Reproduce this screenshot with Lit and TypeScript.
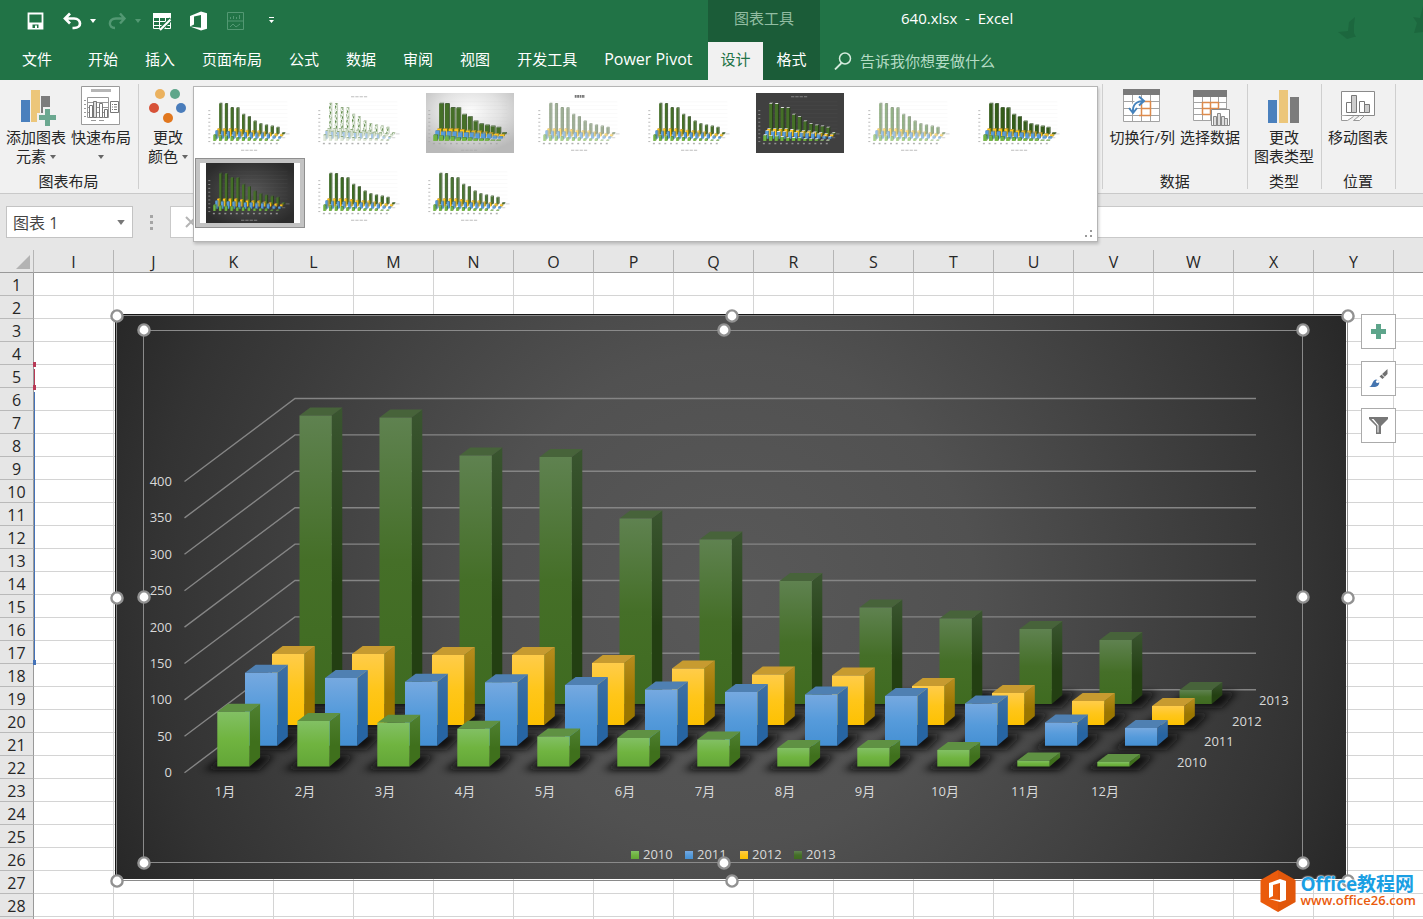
import { LitElement, html, svg, css, nothing } from "lit";
import { customElement, property } from "lit/decorators.js";
import { classMap } from "lit/directives/class-map.js";

const SERIES = [
  {
    name: "2013", x: 299.5, base: 704, labelX: 1259, labelY: 705,
    top: "#47633a", side: ["#3a5530", "#233f12"], front: ["#5f8250", "#456f28", "#3f6b20"],
    tops: [415.5, 417.5, 455.5, 457, 518.5, 539.5, 581, 607.5, 618.5, 629, 640, 690],
  },
  {
    name: "2012", x: 272, base: 725, labelX: 1232, labelY: 726,
    top: "#c79b30", side: ["#b88d1e", "#9a7600"], front: ["#ffcc4a", "#ffc61a", "#fdc101"],
    tops: [654, 654, 655, 655, 663, 668.5, 674.5, 675.5, 686, 693, 701, 706],
  },
  {
    name: "2011", x: 245, base: 745.7, labelX: 1204, labelY: 746,
    top: "#4f80b2", side: ["#3f6fa3", "#2765a3"], front: ["#76a9e0", "#569bdb", "#4590d3"],
    tops: [672.7, 678, 681.7, 682.3, 685, 689.5, 692, 694.5, 696, 703.5, 722.5, 728],
  },
  {
    name: "2010", x: 217.3, base: 766.5, labelX: 1177, labelY: 767,
    top: "#5f9143", side: ["#4f8030", "#3f701c"], front: ["#82c064", "#70b440", "#63a637"],
    tops: [711.7, 721, 722.7, 728.7, 736.5, 738, 739.5, 748, 748, 750, 760.5, 762],
  },
];
const MONTHS = ["1月", "2月", "3月", "4月", "5月", "6月", "7月", "8月", "9月", "10月", "11月", "12月"];
const LEVELS = [400, 350, 300, 250, 200, 150, 100, 50, 0];
const PITCH = 80;
const STEP = 36.4;

/* ---------- gallery thumbnail ---------- */

type Look = {
  name: string;
  bg?: string;
  ink?: string;
  fade?: number;
  wide?: number;
  hatch?: boolean;
  caps?: boolean;
  legendTop?: boolean;
  title?: boolean;
  tint?: string;
};

const LOOKS: Look[] = [
  { name: "样式 1" },
  { name: "样式 2", hatch: true, legendTop: true },
  { name: "样式 3", bg: "light", wide: 58 },
  { name: "样式 4", fade: 0.6, title: true, tint: "#5f7a50" },
  { name: "样式 5" },
  { name: "样式 6", bg: "flat", ink: "#999", wide: 44, caps: true, legendTop: true },
  { name: "样式 7", fade: 0.6, tint: "#4f7f3a" },
  { name: "样式 8", wide: 48, tint: "#345c1a" },
  { name: "样式 9", bg: "dark", ink: "#999" },
  { name: "样式 10", tint: "#3c6a24" },
  { name: "样式 11", tint: "#4a7434" },
];

@customElement("chart-thumb")
class ChartThumb extends LitElement {
  @property({ attribute: false }) look: Look = LOOKS[0];

  static styles = css`
    :host { display: block; width: 88px; height: 60px; }
    svg { display: block; width: 100%; height: 100%; }
  `;

  render() {
    const l = this.look;
    const ink = l.ink ?? "#a9a9a9";
    const w = l.wide ?? 34;
    const bg = l.bg === "light" ? "url(#light)" : l.bg === "dark" ? "url(#dark)" : l.bg === "flat" ? "#404040" : "#fff";
    const legendY = l.legendTop ? 350 : 854;
    return html`<svg viewBox="116 315 1231 565" preserveAspectRatio="none" aria-hidden="true">
      <defs>
        <radialGradient id="light" cx=".5" cy=".3" r=".7"><stop offset="0" stop-color="#fcfcfc"/><stop offset=".5" stop-color="#e2e2e2"/><stop offset="1" stop-color="#b9b9b9"/></radialGradient>
        <radialGradient id="dark" cx=".5" cy=".5" r=".6"><stop offset="0" stop-color="#595959"/><stop offset="1" stop-color="#2c2c2c"/></radialGradient>
        <pattern id="hatch" width="34" height="40" patternUnits="userSpaceOnUse" patternTransform="rotate(28)"><rect width="34" height="40" fill="#f1f6ee"/><rect width="17" height="28" fill="#55823f"/></pattern>
      </defs>
      <rect x="116" y="315" width="1231" height="565" fill=${bg}/>
      ${LEVELS.map((_, i) => svg`
        <path d="M295 ${398 + i * STEP}H1256" stroke=${ink} stroke-width="3" opacity=".22"/>
        <path d="M148 ${481 + i * STEP}h28" stroke=${ink} stroke-width="9"/>`)}
      ${MONTHS.map((_, i) => svg`<path d="M${212 + i * PITCH} 791h28" stroke=${ink} stroke-width="14" opacity=".9"/>`)}
      <g opacity=${l.fade ?? 1}>
        ${SERIES.map((s) => s.tops.map((t, i) => {
          const x = s.x + i * PITCH;
          const green = s.name === "2013";
          const fill = l.hatch ? (green ? "url(#hatch)" : s.name === "2011" ? "#a9c8e6" : "#dfe8d8") : green ? l.tint ?? s.front[1] : s.front[1];
          return svg`<path d="M${x} ${t}h${w}V${s.base}h${-w}z" fill=${fill}/>
            <path d="M${x} ${t}l11 -8h${w}l-11 8z" fill=${l.caps ? "#e8e8e8" : l.hatch ? "#8aa67a" : s.top}/>
            <path d="M${x + w} ${t}l11 -8V${s.base - 10}l-11 10z" fill=${l.hatch ? "#b9c8b0" : s.side[1]}/>`;
        }))}
      </g>
      <path d="M1230 700h55M1180 736h45" stroke=${ink} stroke-width="8" opacity=".7"/>
      <path d="M606 ${legendY}h46m14 0h46m14 0h46m14 0h46" stroke=${ink} stroke-width="11" opacity=".75"/>
      ${l.title ? svg`<path d="M658 346h142" stroke="#777" stroke-width="26" stroke-dasharray="26 8"/>` : nothing}
    </svg>`;
  }
}

/* ---------- the selected chart ---------- */

@customElement("chart-object")
class ChartObject extends LitElement {
  static styles = css`
    :host { display: block; }
    svg { display: block; width: 100%; height: 100%; }
    text { font: 13px "Open Sans", "Noto Sans CJK SC", sans-serif; fill: #d9d9d9; }
    .end { text-anchor: end; }
    .mid { text-anchor: middle; }
    .grid { stroke: #858585; stroke-width: 1.4; fill: none; }
    .frame { stroke: #8a8a8a; stroke-width: 1; fill: none; }
    .handle { fill: #fff; stroke: #919191; stroke-width: 2.4; }
  `;

  private handles(xs: number[], ys: number[]) {
    return ys.map((y, r) => xs.map((x, c) => (r === 1 && c === 1 ? nothing : svg`<circle class="handle" cx=${x} cy=${y} r="5.6"/>`)));
  }

  render() {
    return html`<svg viewBox="108 306 1248 584" role="img" aria-label="三维柱形图">
      <defs>
        <radialGradient id="bg" gradientUnits="userSpaceOnUse" cx="731" cy="597" r="680">
          <stop offset="0" stop-color="#595959"/><stop offset=".36" stop-color="#515151"/>
          <stop offset=".85" stop-color="#333333"/><stop offset="1" stop-color="#272727"/>
        </radialGradient>
        <filter id="soft" x="-50%" y="-100%" width="200%" height="300%"><feGaussianBlur stdDeviation="5 3"/></filter>
        ${SERIES.map((s) => svg`
          <linearGradient id="f${s.name}" x2="0" y2="1"><stop offset="0" stop-color=${s.front[0]}/><stop offset=".5" stop-color=${s.front[1]}/><stop offset="1" stop-color=${s.front[2]}/></linearGradient>
          <linearGradient id="s${s.name}" x2="0" y2="1"><stop offset="0" stop-color=${s.side[0]}/><stop offset=".6" stop-color=${s.side[1]}/></linearGradient>`)}
      </defs>
      <rect x="115" y="314" width="1231" height="565" fill="url(#bg)"/>
      ${LEVELS.map((v, i) => svg`
        <path class="grid" d="M184.500 ${481.5 + i * STEP}L295 ${398.5 + i * STEP}H1256"/>
        <text class="end" x="172" y=${486 + i * STEP}>${v}</text>`)}
      ${SERIES.map((s) => svg`
        <g filter="url(#soft)" opacity=".95">${s.tops.map((_, i) => {
          const x = s.x + i * PITCH;
          return svg`<path d="M${x - 13} ${s.base + 4}l22 -16h48l-15 16z" fill="#0c0c0c"/>`;
        })}</g>
        ${s.tops.map((t, i) => {
          const x = s.x + i * PITCH;
          return svg`<path d="M${x + 32.3} ${t}l10.500 -8V${s.base - 9}l-10.500 9z" fill="url(#s${s.name})"/>
            <path d="M${x} ${t}l10.700 -8h32.300l-10.700 8z" fill=${s.top}/>
            <path d="M${x} ${t}h32.300V${s.base}h-32.300z" fill="url(#f${s.name})"/>`;
        })}
        <text x=${s.labelX} y=${s.labelY}>${s.name}</text>`)}
      ${MONTHS.map((m, i) => svg`<text class="mid" x=${225 + i * PITCH} y="796">${m}</text>`)}
      ${[...SERIES].reverse().map((s, i) => svg`
        <rect x=${631 + Math.round(i * 54.4)} y="851" width="8" height="8" fill="url(#f${s.name})"/>
        <text x=${643 + Math.round(i * 54.4)} y="859">${s.name}</text>`)}
      <rect class="frame" x="143.5" y="330.5" width="1159" height="532"/>
      <path d="M115.500 879V314.500H1346" stroke="#161616" fill="none"/>
      <rect class="frame" x="116.5" y="315.5" width="1231" height="565"/>
      ${this.handles([117, 732, 1348], [316, 598, 881])}
      ${this.handles([144, 724, 1303], [330, 597, 863])}
    </svg>`;
  }
}

/* ---------- icons ---------- */

const quick = {
  save: svg`<path fill="none" stroke="#fff" stroke-width="1.800" d="M1.500 1.500h14v15h-14z"/><path fill="#fff" d="M2 10.500h13V17H2z"/><path fill="#217346" d="M5.500 12.500h6V16h-1.500v-2.500H8V16H5.500z"/>`,
  undo: svg`<path fill="none" stroke="#fff" stroke-width="2.700" d="M2 6.500h9c8 .5 8 9.500 0 9.500H9.500M7 1.500l-5 5 5 5"/>`,
  redo: svg`<path fill="none" stroke="#539873" stroke-width="2.400" d="M16 6.500H8c-8 .5-8 9.500-1 9.500M12 1.500l4.500 5-4.500 5"/>`,
  table: svg`<path fill="#fff" d="M0 1h18v5H0z"/><path fill="none" stroke="#fff" d="M.500 2v14.500h17V2M.500 9.500h17M.500 13.500h17M6.500 6v10M12.500 6v10"/><path stroke="#217346" stroke-width="4" d="M8 17L18 7"/><path stroke="#fff" stroke-width="2.200" d="M7 18l10.500-10.500"/>`,
  office: svg`<path fill="#fff" d="M0 4L11-.5l6 1.700v15.600L11 18.500 0 14.500l11 1.300V3L4 4.600v7.900l-4 2z"/>`,
  sparks: svg`<path fill="none" stroke="#539873" d="M.500.500h16v17H.500zM.500 9h16M3.500 7V5M6.500 7V4M9.500 7V5M12.500 7V3M3 15l3-3 3 3 4-3"/>`,
};

const big = {
  addElement: svg`<path fill="#4a80bd" d="M6 14h9v22H6z"/><path fill="#ecc67a" d="M16 4h9v32h-9z"/><path fill="#7c7c7c" d="M26 10h9v22h-9z"/><path fill="#f1f1f1" d="M28 21h9v6h6v9h-6v6h-9v-6h-6v-9h6z"/><path fill="#6ba890" d="M30 23h5v6h6v5h-6v6h-5v-6h-6v-5h6z"/>`,
  layout: svg`<path fill="#fff" stroke="#9a9a9a" d="M1.500.500h38v38h-38z"/><path fill="#b5b5b5" d="M11 3h20v3H11z"/><path fill="none" stroke="#999" d="M7.500 11.500h21v20h-21zM7.500 16.500h21M7.500 21.500h21M7.500 26.500h21"/><path fill="#fff" stroke="#777" d="M9.500 19.500h3v12h-3zM19.500 17.500h3v14h-3zM24.500 23.500h3v8h-3z"/><path fill="#ddd" stroke="#777" d="M13.500 15.500h3v16h-3z"/><path fill="#fff" stroke="#777" d="M30.500 15.500h8v11h-8z"/><path stroke="#777" stroke-dasharray="1 1 3 9" d="M32 18.500h5M32 21h5M32 23.500h5"/><path stroke="#999" stroke-dasharray="1 3" stroke-width="2" d="M5 14v18"/><path stroke="#999" d="M11 34.500h5M19 34.500h5"/>`,
  colors: svg`<circle cx="13" cy="8" r="5" fill="#ebb25f"/><circle cx="28" cy="8" r="5" fill="#5ea68b"/><circle cx="7" cy="22" r="5" fill="#d75238"/><circle cx="34" cy="22" r="5" fill="#4a7dbb"/><circle cx="21" cy="32" r="5" fill="#e1771e"/>`,
  swap: svg`<path fill="#fff" stroke="#a3a3a3" d="M2.500 3.500h36v32h-36zM2.500 15.500h36M2.500 22.500h36M2.500 29.500h36M11.500 9v26M20.500 9v26M29.500 9v26"/><path fill="#7a7a7a" d="M2 3h37v6H2z"/><path fill="none" stroke="#dc8a4c" stroke-width="1.500" d="M22 15.500h7.500v14H18M20 22.500h10M20.500 18v11"/><path stroke="#fff" stroke-width="5" fill="none" d="M12 26c0-8 4-11 11-11"/><path fill="none" stroke="#4583bd" stroke-width="2" d="M12 27c-1-9 4-12 11-12M18 10.500l5 4.500-5 4.500M8 22l4 5 4-5"/>`,
  select: svg`<path fill="#fff" stroke="#a3a3a3" d="M4.500 4.500h33v30h-33zM4.500 16.500h33M4.500 22.500h33M4.500 28.500h33M13.500 10v24M21.500 10v24M29.500 10v24"/><path fill="#7a7a7a" d="M4 4h34v7H4z"/><path fill="none" stroke="#dc8a4c" stroke-width="1.500" d="M13.500 29V16.500h16V22M13 22.500h17M13.500 28.500h8M21.500 16v12"/><path fill="#fff" stroke="#8a8a8a" d="M22.500 23.500h18v16h-18z"/><path fill="#ddd" stroke="#8a8a8a" d="M24.500 30.500h3v9h-3zM28.500 27.500h3v12h-3zM32.500 30.500h3v9h-3zM35.500 32.500h3v7h-3z"/>`,
  type: svg`<path fill="#4a80bd" d="M5 14h9v23H5z"/><path fill="#ecc67a" d="M16 4h9v33h-9z"/><path fill="#7c7c7c" d="M27 11h9v26h-9z"/>`,
  move: svg`<path fill="#fff" stroke="#8a8a8a" d="M4.500 5.500h33v24h-33z"/><path fill="#fff" stroke="#777" d="M9.500 16.500h5v10h-5z"/><path fill="#ccc" stroke="#777" d="M14.500 9.500h5v17h-5z"/><path fill="#fff" stroke="#777" d="M22.500 15.500h5v11h-5z"/><path fill="#ccc" stroke="#777" d="M27.500 18.500h5v8h-5z"/><path fill="#fff" stroke="#999" d="M4.500 29.500v5h6l6-4M16.500 34.500h6l5-5M16.500 34.500l6-5"/>`,
};

const caret = html`<svg class="caret" viewBox="0 0 6 4" aria-hidden="true"><path fill="currentColor" d="M0 0h6L3 4z"/></svg>`;

/* ---------- application shell ---------- */

@customElement("app-root")
class AppRoot extends LitElement {
  static styles = css`
    :host {
      display: flex;
      flex-direction: column;
      height: 100vh;
      overflow: hidden;
      position: relative;
      font: 15px/19px "Open Sans", "Noto Sans CJK SC", sans-serif;
      color: #262626;
      background: #fff;
    }
    * { box-sizing: border-box; }
    button { font: inherit; color: inherit; background: none; border: 0; padding: 0; margin: 0; }
    svg { display: block; }

    .header { display: flex; flex: none; height: 80px; background: #217346; color: #fff; }
    .main { flex: none; width: 708px; display: flex; flex-direction: column; }
    .quick { height: 42px; display: flex; align-items: center; padding-left: 27px; }
    .quick svg { width: 18px; height: 18px; overflow: visible; }
    .quick .caret, .caret { width: 6px; height: 4px; }
    .q-undo { margin-left: 18px; }
    .q-drop { margin-left: 9px; }
    .q-next { margin-left: 12px; }
    .q-wide { margin-left: 19px; }
    .q-end { margin-left: 24px; }
    .dim { color: #539873; }
    .tabs { height: 38px; display: flex; align-items: center; gap: 27px; padding-left: 22px; padding-bottom: 4px; white-space: nowrap; }
    .tabs .file { margin-right: 9px; }
    .tabs .latin { font-size: 16px; }
    .context { flex: none; width: 112px; background: #1b5c38; }
    .context-title { height: 42px; line-height: 37px; text-align: center; color: #92bda2; }
    .context-tabs { display: grid; grid-template-columns: 55px 57px; height: 38px; }
    .context-tabs button { padding-bottom: 4px; }
    .context-tabs .on { background: #f1f1f1; color: #217346; }
    .right { flex: 1; min-width: 0; display: flex; flex-direction: column; }
    .title { height: 42px; line-height: 37px; padding-left: 81px; font-size: 15px; white-space: pre; }
    .search { height: 38px; display: flex; align-items: center; gap: 8px; padding-left: 14px; }
    .search svg { width: 18px; height: 18px; }
    .search input { flex: 1; min-width: 0; font: inherit; background: none; border: 0; padding: 0; color: #fff; outline: 0; }
    .search input::placeholder { color: #b5dcc5; opacity: 1; }
    .birds { position: absolute; top: 0; right: 0; width: 86px; height: 44px; }

    .ribbon { flex: none; display: flex; height: 114px; background: #f1f1f1; border-bottom: 1px solid #c9c9c9; }
    .group { position: relative; display: flex; flex-direction: column; padding: 6px 7px 0 6px; }
    .group::after { content: ""; position: absolute; right: -1px; top: 4px; bottom: 4px; width: 1px; background: #cfcfcf; }
    .group + .group { margin-left: 1px; }
    .group-row { display: flex; gap: 5px; height: 86px; align-items: flex-start; }
    .group-name { text-align: center; line-height: 19px; }
    .cmd { min-width: 60px; text-align: center; white-space: nowrap; }
    .cmd svg.icon { width: 42px; height: 42px; margin: 0 auto; }
    .cmd .line { display: flex; justify-content: center; align-items: center; height: 19px; gap: 4px; }
    .cmd .caret { color: #666; }
    .styles { flex: 1; min-width: 0; }
    .narrow { min-width: 46px; }
    .tail { flex: none; width: 28px; }

    .gallery {
      position: absolute; z-index: 2; left: 54px; right: 4px; top: 6px; height: 156px;
      background: #fff; border: 1px solid #b5b5b5; box-shadow: 1px 2px 3px rgba(0, 0, 0, .2);
      display: grid; grid-template-columns: repeat(auto-fill, 110px); grid-auto-rows: 70px; align-content: start;
      padding: 1px;
    }
    .thumb { display: flex; align-items: center; justify-content: center; }
    .thumb.on { border: 1px solid #8f8f8f; box-shadow: inset 0 0 0 4px #c3c3c3; }
    .grip { position: absolute; right: 4px; bottom: 3px; width: 8px; height: 8px; }

    .formula { flex: none; display: flex; height: 56px; padding-top: 12px; background: #e6e6e6; align-items: flex-start; }
    .namebox { display: flex; align-items: center; width: 127px; height: 32px; margin-left: 6px; padding: 0 7px 0 6px; border: 1px solid #c3c3c3; background: #fff; }
    .namebox input { flex: 1; min-width: 0; width: 0; border: 0; padding: 0 0 1px; outline: 0; font: 16px "Open Sans", "Noto Sans CJK SC", sans-serif; color: #444; background: none; }
    .namebox .caret { width: 8px; height: 5px; color: #777; }
    .dots { width: 3px; height: 15px; margin: 9px 17px 0 17px; }
    .entry { flex: 1; display: flex; align-items: center; height: 32px; padding-left: 14px; border: 1px solid #c9c9c9; border-right: 0; background: #fff; }
    .entry svg { width: 12px; height: 12px; }
    .entry input { flex: 1; min-width: 0; border: 0; outline: 0; background: none; }

    .sheet { flex: 1; min-height: 0; overflow: hidden; position: relative; background: #fff; }
    table { table-layout: fixed; border-collapse: separate; border-spacing: 0; width: 1474px; }
    .c-row { width: 34px; }
    th { font-weight: 400; font-size: 16px; line-height: 20px; height: 23px; padding: 2px 0 0; background: #e6e6e6; color: #262626; border-right: 1px solid #b5b5b5; border-bottom: 1px solid #999; text-align: center; }
    th.row { border-right-color: #999; border-bottom-color: #b9b9b9; padding-top: 3px; line-height: 19px; }
    td { height: 23px; padding: 0; border-right: 1px solid #d4d4d4; border-bottom: 1px solid #d4d4d4; }
    .corner svg { width: 14px; height: 14px; margin: 0 3px 0 auto; }
    .ranges { position: absolute; left: 33px; top: 111px; width: 4px; height: 306px; }
    .chart { position: absolute; left: 108px; top: 56px; width: 1248px; height: 584px; }
    .side { position: absolute; left: 1361px; top: 64px; display: flex; flex-direction: column; gap: 12px; }
    .side button { width: 35px; height: 35px; display: flex; align-items: center; justify-content: center; background: #fff; border: 1px solid #ababab; }
    .side svg { width: 19px; height: 19px; }

    .brand { position: absolute; right: 7px; bottom: 6px; display: flex; align-items: center; text-decoration: none; white-space: nowrap; }
    .brand svg { width: 50px; height: 44px; margin-right: -9px; }
    .brand-name { display: block; font: 700 19px/18px "Open Sans", "Noto Sans CJK SC", sans-serif; color: #1b9fe3; text-shadow: 0 0 2px #fff, 0 0 2px #fff, 0 0 1px #fff; }
    .brand-url { display: block; font: 600 13px/14px "Open Sans", sans-serif; color: #ea5a0b; text-shadow: 0 0 2px #fff, 0 0 1px #fff; }
  `;

  private cmd(icon: unknown, one: string, two?: string, drop = false, cls = "") {
    return html`<button class="cmd ${cls}">
      <svg class="icon" viewBox="0 0 42 42" aria-hidden="true">${icon}</svg>
      <span class="line">${one}</span>
      ${two !== undefined ? html`<span class="line">${two}${drop ? caret : nothing}</span>` : nothing}
    </button>`;
  }

  private q(icon: unknown, label: string, cls = "") {
    return html`<button class=${cls} aria-label=${label}><svg viewBox="0 0 18 18" aria-hidden="true">${icon}</svg></button>`;
  }

  render() {
    const tabs = ["文件", "开始", "插入", "页面布局", "公式", "数据", "审阅", "视图", "开发工具", "Power Pivot"];
    const cols = [..."IJKLMNOPQRSTUVWXY", ""];
    const rows = [...Array.from({ length: 28 }, (_, i) => String(i + 1)), ""];
    return html`
      <header class="header">
        <div class="main">
          <div class="quick">
            ${this.q(quick.save, "保存")}
            ${this.q(quick.undo, "撤消", "q-undo")}
            <button class="q-drop" aria-label="撤消列表">${caret}</button>
            ${this.q(quick.redo, "恢复", "q-next")}
            <button class="q-drop dim" aria-label="恢复列表">${caret}</button>
            ${this.q(quick.table, "数据透视表", "q-next")}
            ${this.q(quick.office, "Office", "q-wide")}
            ${this.q(quick.sparks, "迷你图", "q-wide")}
            <button class="q-end" aria-label="自定义快速访问工具栏"><svg viewBox="0 0 18 18" aria-hidden="true"><path fill="#fff" d="M0 5h5v1H0zM0 8h5L2.500 11z"/></svg></button>
          </div>
          <nav class="tabs">
            ${tabs.map((t) => html`<button class=${classMap({ file: t === "文件", latin: t === "Power Pivot" })}>${t}</button>`)}
          </nav>
        </div>
        <div class="context">
          <div class="context-title">图表工具</div>
          <div class="context-tabs"><button class="on">设计</button><button>格式</button></div>
        </div>
        <div class="right">
          <div class="title">640.xlsx  -  Excel</div>
          <label class="search">
            <svg viewBox="0 0 18 18" aria-hidden="true"><circle cx="11" cy="6.500" r="5.500" fill="none" stroke="#d5ebdd" stroke-width="1.500"/><path stroke="#d5ebdd" stroke-width="1.800" d="M7.500 11L1 17.500"/></svg>
            <input type="search" aria-label="告诉我你想要做什么" placeholder="告诉我你想要做什么" />
          </label>
        </div>
        <svg class="birds" viewBox="0 0 86 44" aria-hidden="true"><path fill="#1c643c" d="M18 17l-6 5-1 9-10 1 9 7 7-2 2 0-2-4 0-8zM86 6l-3 12-7-1 4 6-3 10 9-1z" opacity=".8"/></svg>
      </header>

      <section class="ribbon">
        <div class="group">
          <div class="group-row">
            ${this.cmd(big.addElement, "添加图表", "元素", true)}
            ${this.cmd(big.layout, "快速布局", "", true)}
          </div>
          <div class="group-name">图表布局</div>
        </div>
        <div class="group styles">
          <div class="group-row">${this.cmd(big.colors, "更改", "颜色", true, "narrow")}</div>
          <div class="gallery">
            ${LOOKS.map((l, i) => html`<button class=${classMap({ thumb: true, on: i === 8 })} aria-label=${l.name}><chart-thumb .look=${l}></chart-thumb></button>`)}
            <svg class="grip" viewBox="0 0 8 8" aria-hidden="true"><path fill="#999" d="M5 0h2v2H5zM0 5h2v2H0zM5 5h2v2H5z"/></svg>
          </div>
        </div>
        <div class="group">
          <div class="group-row">${this.cmd(big.swap, "切换行/列")}${this.cmd(big.select, "选择数据")}</div>
          <div class="group-name">数据</div>
        </div>
        <div class="group">
          <div class="group-row">${this.cmd(big.type, "更改", "图表类型")}</div>
          <div class="group-name">类型</div>
        </div>
        <div class="group">
          <div class="group-row">${this.cmd(big.move, "移动图表")}</div>
          <div class="group-name">位置</div>
        </div>
        <div class="tail"></div>
      </section>

      <section class="formula">
        <div class="namebox"><input aria-label="名称框" .value=${"图表 1"} />${caret}</div>
        <svg class="dots" viewBox="0 0 3 15" aria-hidden="true"><path fill="#a5a5a5" d="M0 0h3v3H0zM0 6h3v3H0zM0 12h3v3H0z"/></svg>
        <div class="entry">
          <svg viewBox="0 0 12 12" aria-hidden="true"><path stroke="#b5b5b5" stroke-width="2" d="M1 1l10 10M11 1L1 11"/></svg>
          <input aria-label="编辑栏" />
        </div>
      </section>

      <main class="sheet">
        <table>
          <colgroup><col class="c-row" />${cols.map(() => html`<col />`)}</colgroup>
          <thead>
            <tr>
              <th class="corner" aria-label="全选"><svg viewBox="0 0 14 14" aria-hidden="true"><path fill="#b3b3b3" d="M14 0v14H0z"/></svg></th>
              ${cols.map((c) => html`<th scope="col">${c}</th>`)}
            </tr>
          </thead>
          <tbody>
            ${rows.map((r) => html`<tr><th class="row" scope="row">${r}</th>${cols.map(() => html`<td></td>`)}</tr>`)}
          </tbody>
        </table>
        <svg class="ranges" viewBox="0 0 4 306" aria-hidden="true">
          <path fill="#b83a56" d="M0 1h3v5H0zM1 8h1v16H1zM0 24h3v5H0z"/>
          <path fill="#4472b8" d="M1 31h1v268H1zM0 299h3v5H0z"/>
        </svg>
        <chart-object class="chart"></chart-object>
        <div class="side">
          <button aria-label="图表元素"><svg viewBox="0 0 19 19"><path fill="#5ea58b" d="M7 2h5v5h5v5h-5v5H7v-5H2V7h5z"/></svg></button>
          <button aria-label="图表样式"><svg viewBox="0 0 19 19"><path fill="#707070" d="M18.500 0v5l-5 5-3-2.500z"/><path stroke="#fff" d="M12.500 5l3 3"/><path fill="#4575b0" d="M0 18c4-1 3-7 7-7.500 5 .5 4 7-1 7.500z"/><circle cx="8.500" cy="12.500" r="1.600" fill="#fff"/></svg></button>
          <button aria-label="图表筛选器"><svg viewBox="0 0 19 19"><path fill="#777" d="M0 1h19v2l-7 7v8H7v-8L0 3z"/><path fill="#fff" d="M2.500 3l6 6.500V16.500h1V9L4.500 3z"/></svg></button>
        </div>
      </main>

      <a class="brand" href="#">
        <svg viewBox="0 0 50 44" aria-hidden="true"><path fill="#ea5b0c" d="M18 1l17.500 10v22L18 43 .5 33V11z"/><path fill="#c74a08" d="M18 1v42l17.500-10V11z" opacity=".25"/><path fill="#fff" d="M9 14l11-4 6 2v19l-6 2-11-3 11 1V14l-7 2v11l-4 2z"/></svg>
        <span><span class="brand-name">Office教程网</span><span class="brand-url">www.office26.com</span></span>
      </a>
    `;
  }
}
